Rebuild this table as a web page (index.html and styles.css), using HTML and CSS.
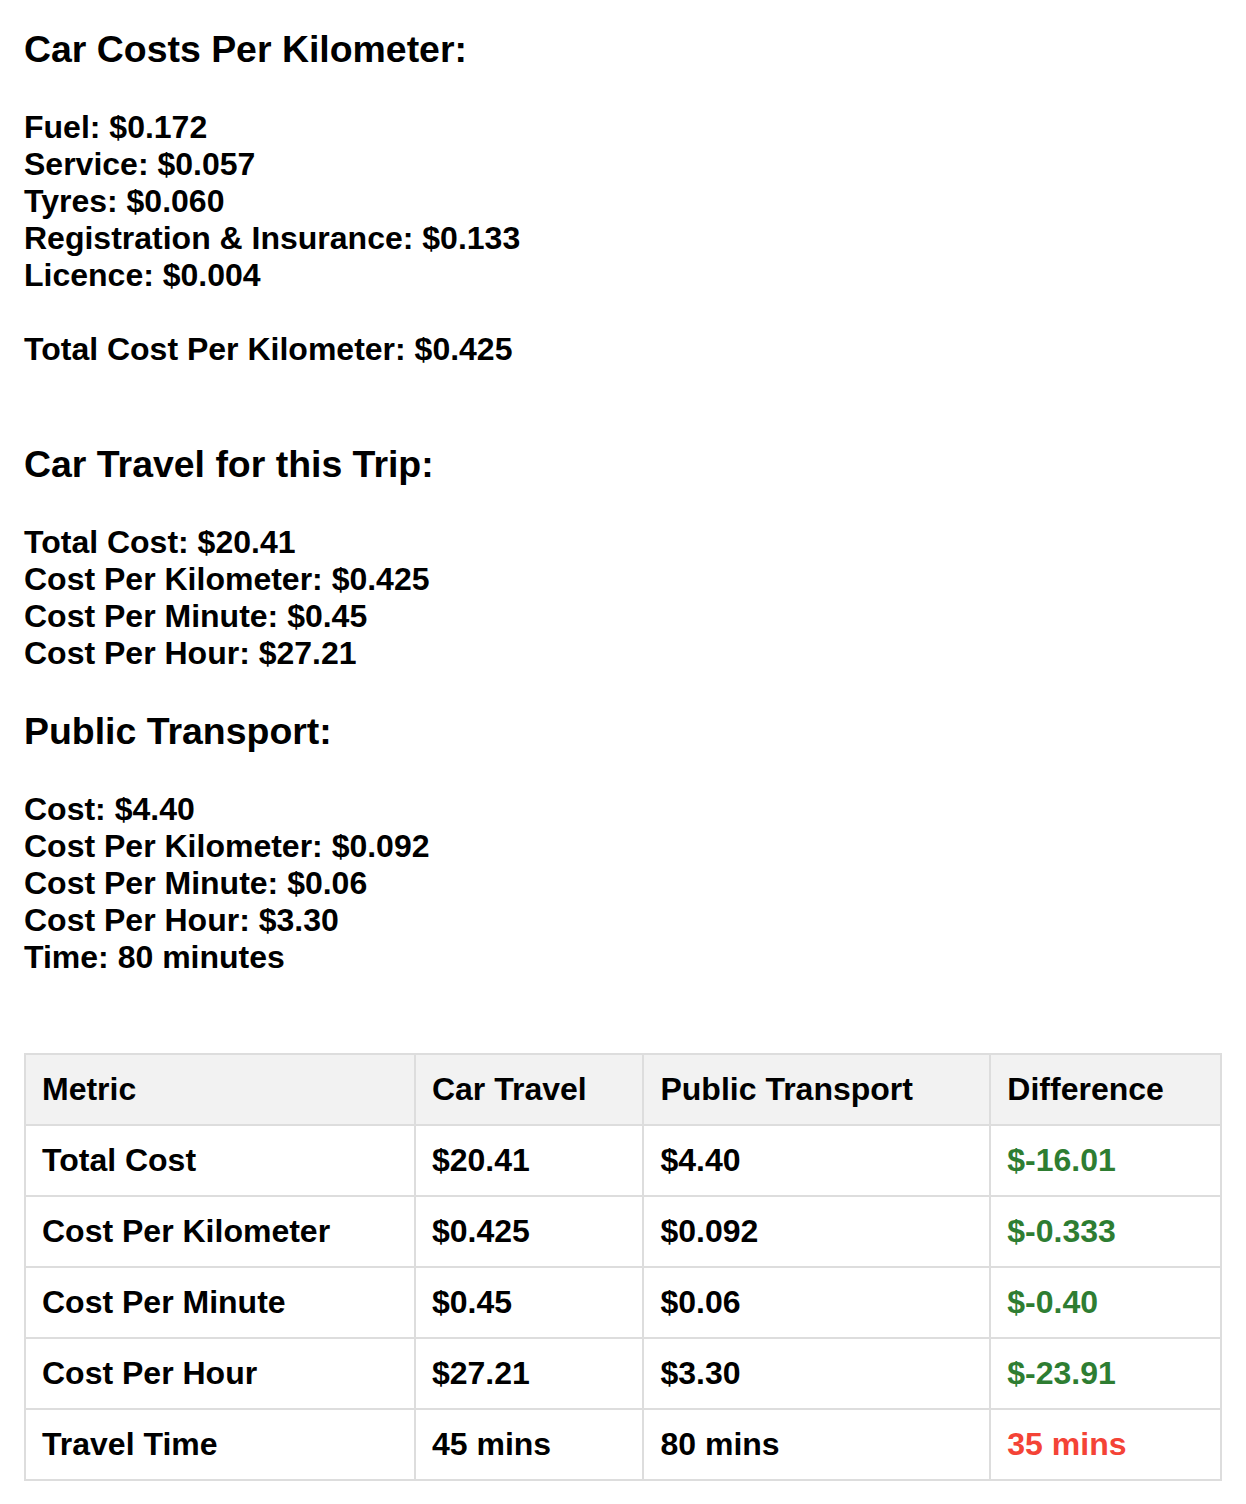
FILE: index.html
```html
<!DOCTYPE html>
<html lang="en">
<head>
<meta charset="utf-8">
<title>Car vs Public Transport</title>
<link rel="stylesheet" href="styles.css">
</head>
<body>
<main class="page">
  <section class="block">
    <h3 class="title first">Car Costs Per Kilometer:</h3>
    <p class="lines">Fuel: $0.172<br>Service: $0.057<br>Tyres: $0.060<br>Registration &amp; Insurance: $0.133<br>Licence: $0.004<br><br>Total Cost Per Kilometer: $0.425<br><br></p>
  </section>
  <section class="block">
    <h3 class="title">Car Travel for this Trip:</h3>
    <p class="lines">Total Cost: $20.41<br>Cost Per Kilometer: $0.425<br>Cost Per Minute: $0.45<br>Cost Per Hour: $27.21</p>
  </section>
  <section class="block">
    <h3 class="title">Public Transport:</h3>
    <p class="lines">Cost: $4.40<br>Cost Per Kilometer: $0.092<br>Cost Per Minute: $0.06<br>Cost Per Hour: $3.30<br>Time: 80 minutes</p>
  </section>
  <table class="compare">
    <thead>
      <tr><th>Metric</th><th>Car Travel</th><th>Public Transport</th><th>Difference</th></tr>
    </thead>
    <tbody>
      <tr><td>Total Cost</td><td>$20.41</td><td>$4.40</td><td class="good">$-16.01</td></tr>
      <tr><td>Cost Per Kilometer</td><td>$0.425</td><td>$0.092</td><td class="good">$-0.333</td></tr>
      <tr><td>Cost Per Minute</td><td>$0.45</td><td>$0.06</td><td class="good">$-0.40</td></tr>
      <tr><td>Cost Per Hour</td><td>$27.21</td><td>$3.30</td><td class="good">$-23.91</td></tr>
      <tr><td>Travel Time</td><td>45 mins</td><td>80 mins</td><td class="bad">35 mins</td></tr>
    </tbody>
  </table>
</main>
</body>
</html>
```
FILE: styles.css
```css
html, body {
  margin: 0;
  padding: 0;
  background: #fff;
}

.page {
  padding: 0 24px 24px;
  font-family: "Liberation Sans", Arial, Helvetica, sans-serif;
  font-weight: bold;
  font-size: 32px;
  line-height: 37px;
  color: #000;
}

.title {
  font-size: 37.44px;
  line-height: 43px;
  font-weight: bold;
  margin: 38px 0;
}

.title.first {
  margin-top: 28px;
}

.lines {
  margin: 0;
}

.compare {
  width: 100%;
  border-collapse: collapse;
  margin-top: 77px;
}

.compare th,
.compare td {
  border: 2px solid #ddd;
  padding: 16px;
  text-align: left;
  line-height: 37px;
  font-weight: bold;
}

.compare th {
  background: #f2f2f2;
}

.good {
  color: #2e7d32;
}

.bad {
  color: #f44336;
}
```
